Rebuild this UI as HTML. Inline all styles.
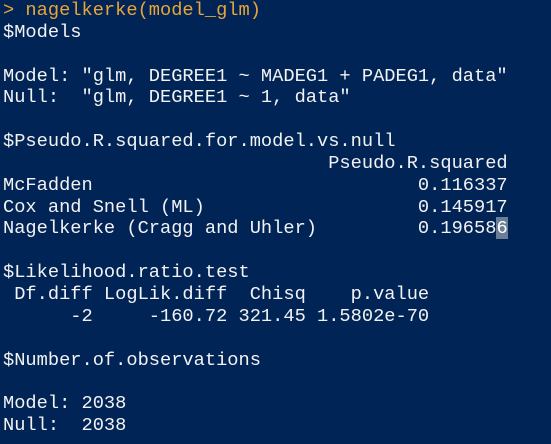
<!DOCTYPE html>
<html><head><style>
html,body{margin:0;padding:0;background:#012456;width:551px;height:444px;overflow:hidden}
pre{margin:0;padding:0 0 0 3px;position:relative;top:0px;font-family:"Liberation Mono",monospace;font-size:18.7px;line-height:21.85px;color:#f2f2f2;white-space:pre}
.p{color:#e8a53a}
.c{background:#6a7f96;color:#fff}
</style></head><body><pre><span class="p">&gt; nagelkerke(model_glm)</span>
$Models

Model: "glm, DEGREE1 ~ MADEG1 + PADEG1, data"
Null:  "glm, DEGREE1 ~ 1, data"

$Pseudo.R.squared.for.model.vs.null
                             Pseudo.R.squared
McFadden                             0.116337
Cox and Snell (ML)                   0.145917
Nagelkerke (Cragg and Uhler)         0.19658<span class="c">6</span>

$Likelihood.ratio.test
 Df.diff LogLik.diff  Chisq    p.value
      -2     -160.72 321.45 1.5802e-70

$Number.of.observations

Model: 2038
Null:  2038</pre></body></html>
